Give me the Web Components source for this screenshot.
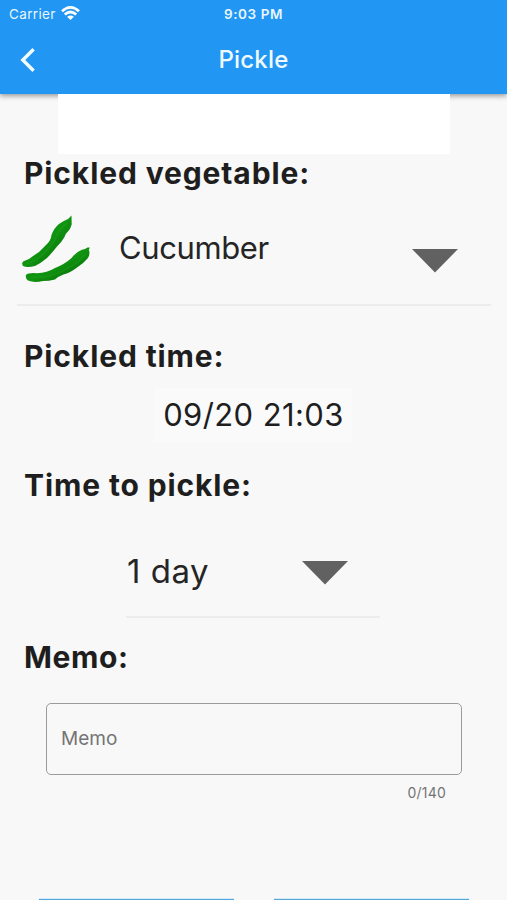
<!DOCTYPE html>
<html lang="en">
<head>
<meta charset="utf-8">
<title>Pickle</title>
<style>
html,body{margin:0;height:900px;overflow:hidden;background:#f8f8f8}
body{font-family:Inter,"Liberation Sans",sans-serif;color:#1e1e1e}
</style>
</head>
<body>
<pickle-page></pickle-page>
<script>
function define(name, html) {
  const template = document.createElement('template');
  template.innerHTML = html;
  customElements.define(name, class extends HTMLElement {
    constructor() {
      super();
      this.attachShadow({ mode: 'open' }).append(template.content.cloneNode(true));
    }
  });
}

define('status-bar', `
<style>
:host{display:grid;grid-template-columns:1fr auto 1fr;align-items:center;height:28px;padding:0 9px;font-size:13.5px;color:#e9f6ff;white-space:nowrap}
.left{display:flex;align-items:center;gap:5px}
.carrier{letter-spacing:.35px}
.time{font-weight:600;letter-spacing:.6px}
svg{display:block;margin-top:-3px}
</style>
<div class="left"><span class="carrier">Carrier</span>
<svg width="19" height="14" viewBox="0 0 19 14" fill="none" stroke="#fff" stroke-width="2.7"><path d="M1 5.2Q9.5 -2.4 18 5.2"/><path d="M3.8 8.6Q9.5 3.4 15.2 8.6"/><path d="M6.1 10.8Q9.5 8 12.9 10.8L9.5 14Z" fill="#fff" stroke="none"/></svg></div>
<span class="time">9:03 PM</span><span></span>`);

define('nav-bar', `
<style>
:host{display:grid;grid-template-columns:48px 1fr 48px;align-items:center;height:64px;color:#eefaff}
svg{display:block;margin-left:18px}
.title{text-align:center;font-size:24px;font-weight:500;letter-spacing:.2px;padding-bottom:1px}
</style>
<svg width="20" height="28" viewBox="0 0 20 28" fill="none" stroke="#f2fcff" stroke-width="3.4"><path d="M15.6 3.2L4.8 14L15.6 24.8"/></svg>
<span class="title"><slot></slot></span>`);

define('app-header', `
<style>
:host{display:block;height:94px;background:#2196f3;box-shadow:0 2px 5px rgba(0,0,0,.38)}
</style><slot></slot>`);

define('ad-banner', `<style>:host{display:block;position:relative;width:392px;height:60px;margin-left:58px;background:#fff}</style>`);

define('section-title', `
<style>
:host{display:flex;align-items:center;box-sizing:border-box;height:39px;padding:0 0 2px 24px;font-size:30px;font-weight:700;white-space:nowrap;letter-spacing:var(--track,.88px)}
</style><slot></slot>`);

define('down-arrow', `
<style>:host{display:block}svg{display:block}</style>
<svg width="46" height="24" viewBox="0 0 46 24"><path d="M0 0H46L23 23.5Z" fill="#616161"/></svg>`);

define('cucumber-icon', `
<style>:host{display:block}svg{display:block}</style>
<svg width="70" height="68" viewBox="0 0 70 68">
<defs><linearGradient id="g" x1="0" y1="0" x2="1" y2="1"><stop offset="0" stop-color="#07870b"/><stop offset=".5" stop-color="#109510"/><stop offset="1" stop-color="#075e08"/></linearGradient></defs>
<path d="M50.5 .5L50.7 9.5Q49.5 14 46.5 17Q44 19 43.5 22Q40 28 36 31.5Q31 38 26 43Q20 48 14 51Q6 53 2 51Q.2 48 2.5 46.2Q8 45 12 41Q19 37 24 31Q30 26 30.5 20Q33 13 38 9Q42 6 47 4Z" fill="url(#g)"/>
<path d="M68.8 32.5L67.8 35Q69.5 38 67 43Q62 49 56 52.5Q49 58 42.5 59.5Q37 61.5 34 64.5Q28 66 22 66Q13 68 7 65.5Q4 63 5 60Q7 57.5 16 58.2Q26 58 34 53Q44 49 50.5 43Q57 35 64 34L66.5 32.5Z" fill="url(#g)"/>
<path d="M5 49Q20 45 33 26Q38 14 46 8M10 62Q30 64 45 54Q57 49 64 39" stroke="#36b52e" stroke-opacity=".18" stroke-width="2" fill="none"/>
</svg>`);

define('select-row', `
<style>
:host{display:flex;box-sizing:border-box;border-bottom:2px solid #ececec;font-size:31px;color:#252525;white-space:nowrap}
.value{display:flex;align-items:center;height:100%;flex:1}
</style><slot name="icon"></slot><span class="value"><slot></slot></span><slot name="arrow"></slot>`);

define('time-button', `
<style>
:host{display:flex;align-items:center;justify-content:center;box-sizing:border-box;width:198px;height:54px;margin-left:154px;padding:0 0 1px 1px;background:#fafafa;font-size:31px;white-space:nowrap;letter-spacing:.4px}
</style><slot></slot>`);

define('memo-field', `
<style>
:host{display:block;width:416px;margin-left:46px;color:#747474}
.box{display:flex;align-items:center;box-sizing:border-box;height:72px;border:1px solid #9b9b9b;border-radius:5px;padding:0 0 2px 14px;font-size:19px}
.count{display:flex;justify-content:flex-end;align-items:center;box-sizing:border-box;height:36px;padding:0 16px 1px 0;font-size:14px;letter-spacing:.2px}
</style>
<div class="box"><slot></slot></div><div class="count"><slot name="count"></slot></div>`);

define('action-bar', `
<style>
:host{display:flex;gap:40px;padding-left:39px}
div{box-sizing:border-box;width:195px;height:40px;border-top:1px solid #d3edf8;border-radius:1px;background:#55a5da}
</style><div></div><div></div>`);

define('pickle-page', `
<style>
:host{display:flex;flex-direction:column;width:507px;height:900px;overflow:hidden}
:host>*{flex-shrink:0}
.veg{width:474px;height:113px;margin-left:17px}
.veg cucumber-icon{margin:22px 0 0 4px;width:70px}
.veg .name{margin-left:28px;padding-bottom:2px;letter-spacing:-.4px}
.veg down-arrow{margin:56px 33px 0 0}
.days{width:254px;height:94px;margin:0 0 0 126px;font-size:33px;letter-spacing:.5px}
.days span{margin-left:1px;padding-top:2px}
.days down-arrow{margin:37px 32px 0 0}
</style>
<app-header><status-bar></status-bar><nav-bar>Pickle</nav-bar></app-header>
<ad-banner></ad-banner>
<section-title>Pickled vegetable:</section-title>
<select-row class="veg"><cucumber-icon slot="icon"></cucumber-icon><span class="name">Cucumber</span><down-arrow slot="arrow"></down-arrow></select-row>
<section-title style="margin-top:31px">Pickled time:</section-title>
<time-button style="margin-top:12px">09/20 21:03</time-button>
<section-title style="margin-top:24px">Time to pickle:</section-title>
<select-row class="days" style="margin-top:19px"><span>1 day</span><down-arrow slot="arrow"></down-arrow></select-row>
<section-title style="margin-top:20px;--track:.6px">Memo:</section-title>
<memo-field style="margin-top:26px">Memo<span slot="count">0/140</span></memo-field>
<action-bar style="margin-top:87px"></action-bar>`);
</script>
</body>
</html>
